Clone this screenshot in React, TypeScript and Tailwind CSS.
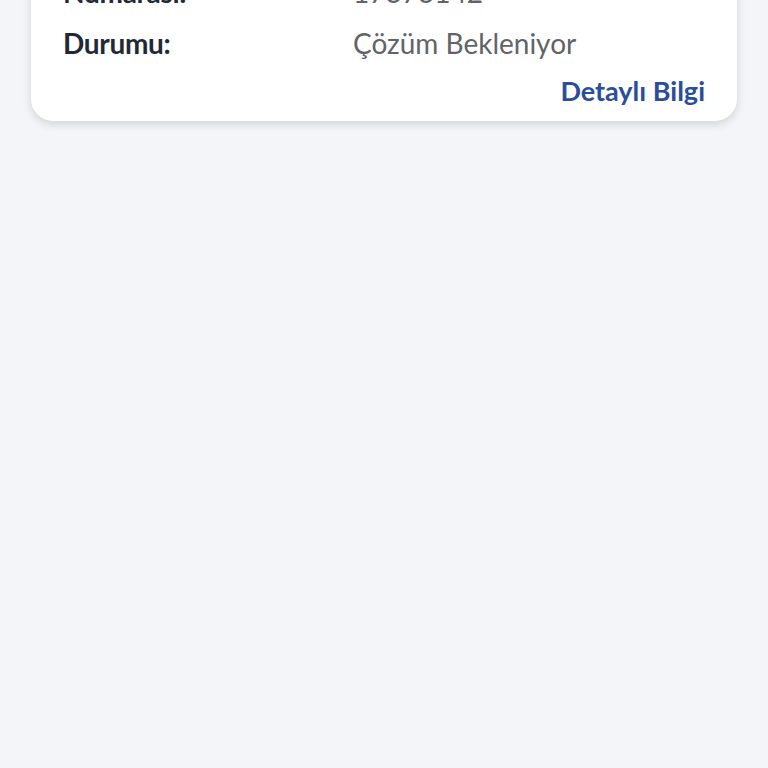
import React from 'react';

const rows = [
  { label: 'Numarası:', value: '17373142' },
  { label: 'Durumu:', value: 'Çözüm Bekleniyor' },
];

const App = () => {
  return (
    <div className="min-h-screen bg-[#f4f5f8] px-[31px] overflow-hidden" style={{ fontFamily: 'Lato, "Noto Sans", sans-serif' }}>
      <div className="-mt-[47px] bg-white rounded-[22px] shadow-[0_3px_10px_rgba(0,0,0,0.14)] pt-[24px] pb-[15px] px-8">
        <div className="flex flex-col gap-[21px]">
          {rows.map((row) => (
            <div key={row.label} className="grid grid-cols-[290px_1fr] text-[28px] leading-[30px]">
              <div className="font-bold text-[#1f2a37] tracking-[-0.3px]">{row.label}</div>
              <div className="text-[#5f6469]">{row.value}</div>
            </div>
          ))}
        </div>
        <div className="mt-[18px] flex justify-end">
          <span className="text-[27px] leading-[30px] font-bold text-[#2a4e9c]">Detaylı Bilgi</span>
        </div>
      </div>
    </div>
  );
};

export default App;
